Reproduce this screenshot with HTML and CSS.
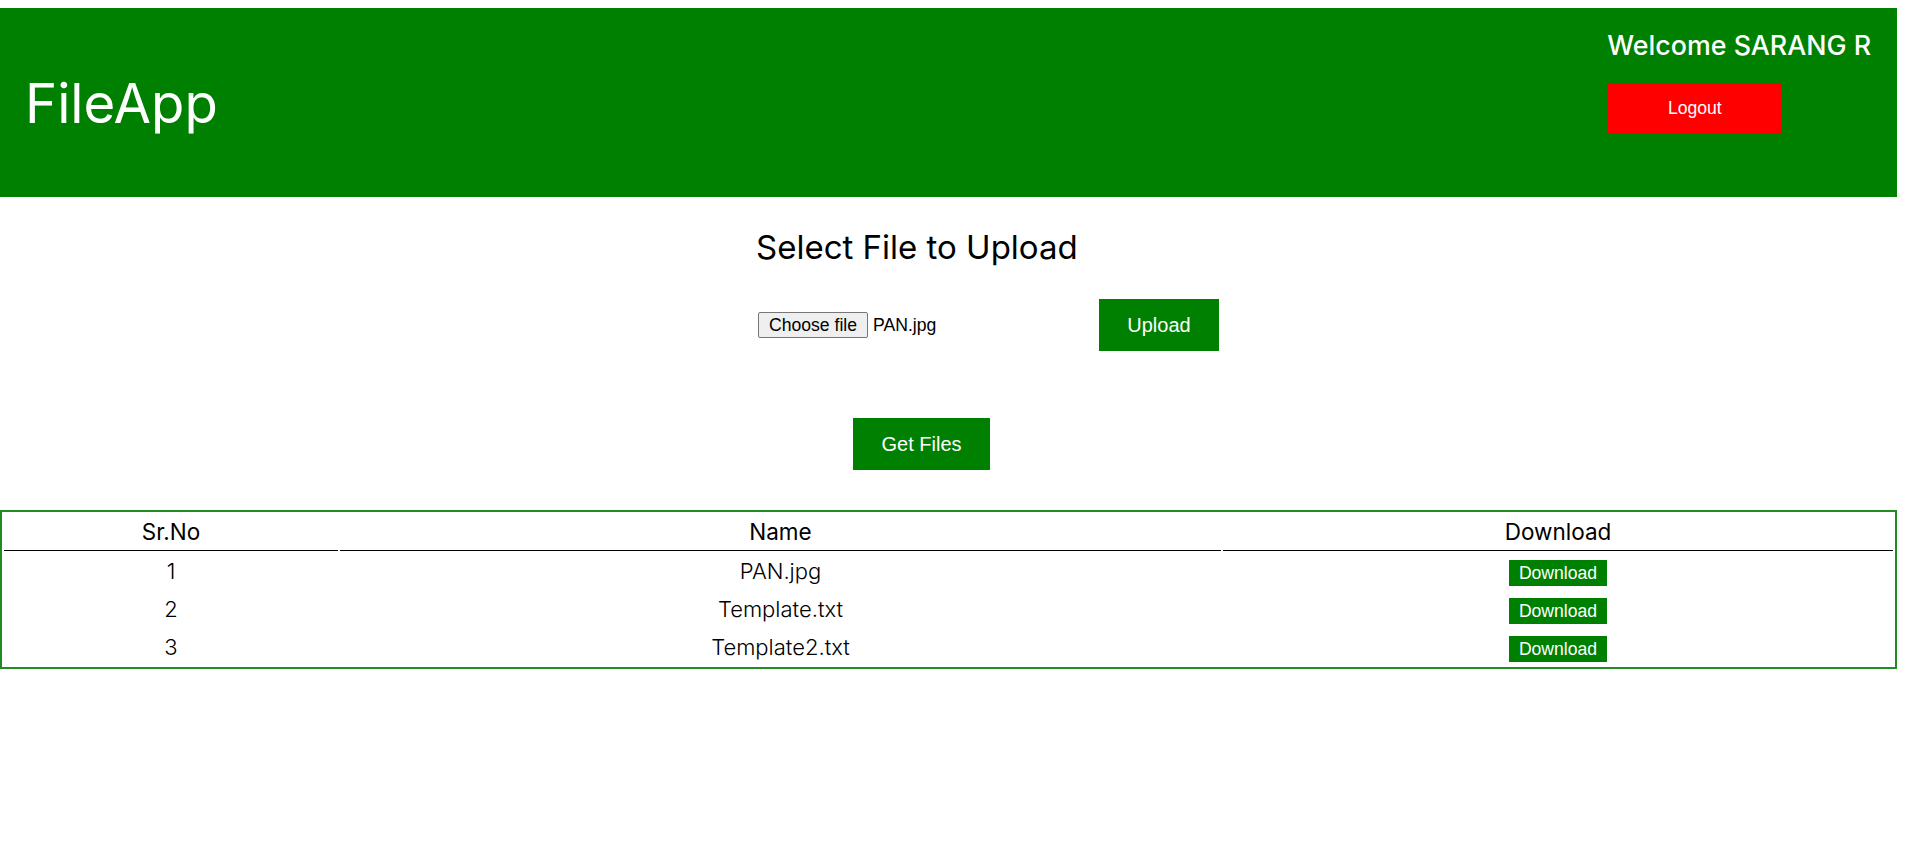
FILE: index.html
```html
<!DOCTYPE html>
<html lang="en">
<head>
<meta charset="utf-8">
<title>FileApp</title>
<link rel="stylesheet" href="styles.css">
</head>
<body>
<div class="page">
  <header class="topbar">
    <h1 class="brand">FileApp</h1>
    <div class="user">
      <h2 class="welcome">Welcome SARANG R</h2>
      <button class="logout" type="button">Logout</button>
    </div>
  </header>
  <main class="content">
    <section class="upload">
      <h2 class="upload-title">Select File to Upload</h2>
      <div class="upload-row">
        <label class="file-picker">
          <span class="file-btn">Choose file</span>
          <span class="file-name">PAN.jpg</span>
        </label>
        <button class="btn btn-upload" type="button">Upload</button>
      </div>
    </section>
    <div class="get-row">
      <button class="btn btn-get" type="button">Get Files</button>
    </div>
    <table class="files">
      <colgroup>
        <col class="c-no">
        <col class="c-name">
        <col class="c-dl">
      </colgroup>
      <thead>
        <tr><th>Sr.No</th><th>Name</th><th>Download</th></tr>
      </thead>
      <tbody>
        <tr><td>1</td><td>PAN.jpg</td><td><button class="dl" type="button">Download</button></td></tr>
        <tr><td>2</td><td>Template.txt</td><td><button class="dl" type="button">Download</button></td></tr>
        <tr><td>3</td><td>Template2.txt</td><td><button class="dl" type="button">Download</button></td></tr>
      </tbody>
    </table>
  </main>
</div>
</body>
</html>
```
FILE: styles.css
```css
* { box-sizing: border-box; }

html, body {
  margin: 0;
  padding: 0;
  background: #ffffff;
}

body {
  padding-top: 8px;
  font-family: "Inter", "Open Sans", sans-serif;
  color: #000;
}

.page {
  width: 1897px;
}

.topbar {
  height: 189px;
  background: #008000;
  display: flex;
  justify-content: space-between;
  align-items: flex-start;
  padding: 0 26px 0 25px;
  color: #fff;
}

.brand {
  margin: 0;
  align-self: center;
  font-size: 54.5px;
  font-weight: 400;
  line-height: 66px;
  letter-spacing: 0;
}

.user {
  padding-top: 22px;
  display: flex;
  flex-direction: column;
  align-items: flex-start;
}

.welcome {
  margin: 0 0 0 1px;
  font-size: 26.8px;
  font-weight: 500;
  line-height: 30px;
}

.logout {
  margin-top: 24px;
  margin-left: 1px;
  width: 175px;
  height: 49px;
  border: none;
  background: #ff0000;
  color: #fff;
  font-family: "Liberation Sans", Arial, sans-serif;
  font-size: 17.6px;
  padding: 0;
}

.content {
  display: flex;
  flex-direction: column;
}

.upload {
  margin-left: 756px;
  margin-top: 31px;
}

.upload-title {
  margin: 0;
  font-size: 33px;
  font-weight: 400;
  line-height: 38px;
}

.upload-row {
  margin-top: 33px;
  display: flex;
  align-items: center;
  margin-left: 2px;
}

.file-picker {
  width: 341px;
  display: flex;
  align-items: center;
  font-family: "Liberation Sans", Arial, sans-serif;
  font-size: 17.6px;
}

.file-btn {
  height: 26px;
  line-height: 24px;
  padding: 0 10px;
  background: #efefef;
  border: 1px solid #767676;
  border-radius: 2px;
  color: #000;
}

.file-name {
  margin-left: 5px;
}

.btn {
  height: 52px;
  border: none;
  background: #008000;
  color: #fff;
  font-family: "Liberation Sans", Arial, sans-serif;
  font-size: 20px;
  padding: 0;
}

.btn-upload { width: 120px; }

.get-row {
  margin-top: 67px;
  padding-left: 853px;
}

.btn-get { width: 137px; }

.files {
  margin-top: 40px;
  width: 1897px;
  table-layout: fixed;
  border: 2px solid #228b22;
  border-spacing: 2px;
}

.c-no { width: 334px; }
.c-name { width: 881px; }
.c-dl { width: 670px; }

.files th {
  height: 37px;
  padding: 0;
  font-size: 22.5px;
  font-weight: 400;
  line-height: 36px;
  border-bottom: 1px solid #000;
  text-align: center;
}

.files td {
  height: 36px;
  padding: 0;
  font-size: 22px;
  font-weight: 300;
  line-height: 36px;
  text-align: center;
}

.dl {
  display: inline-block;
  height: 26px;
  padding: 0 10px;
  border: none;
  background: #008000;
  color: #fff;
  font-family: "Liberation Sans", Arial, sans-serif;
  font-size: 17.6px;
  line-height: 26px;
  vertical-align: baseline;
}
```
